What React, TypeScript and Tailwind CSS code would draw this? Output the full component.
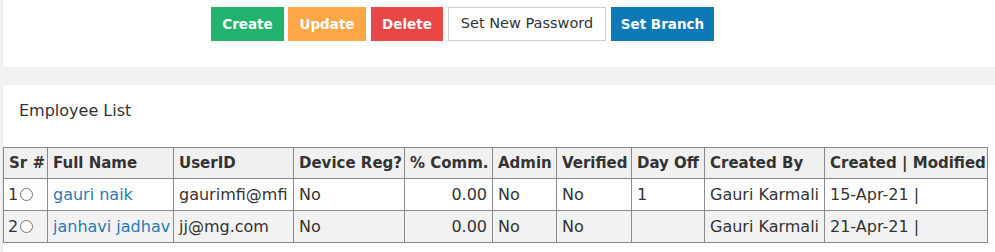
import React from "react";

const font = { fontFamily: '"DejaVu Sans", "Open Sans", sans-serif' };

function Radio() {
  return (
    <span className="inline-block w-[13px] h-[13px] rounded-full border border-[#777] bg-white align-[-1px] ml-[2px]" />
  );
}

const rows = [
  { sr: "1", name: "gauri naik", uid: "gaurimfi@mfi", dev: "No", comm: "0.00", admin: "No", ver: "No", off: "1", by: "Gauri Karmali", cm: "15-Apr-21 |" },
  { sr: "2", name: "janhavi jadhav", uid: "jj@mg.com", dev: "No", comm: "0.00", admin: "No", ver: "No", off: "", by: "Gauri Karmali", cm: "21-Apr-21 |" },
];

export default function App() {
  const th = "border border-[#8a8a8a] px-[5px] text-left font-bold text-[15px] h-[31px] whitespace-nowrap";
  const td = "border border-[#8a8a8a] px-[5px] h-[32px] whitespace-nowrap";
  return (
    <div className="w-[995px] h-[252px] bg-[#f1f2f4] overflow-hidden text-[#333]" style={font}>
      <div className="ml-[2px] h-[67px] bg-white border-l border-[#e6e6e6] flex gap-[4px] pl-[208px] pt-[7px]">
        <button className="h-[34px] w-[73px] bg-[#21b36b] text-white text-[13.5px] font-bold">Create</button>
        <button className="h-[34px] w-[78px] bg-[#ffa646] text-white text-[13.5px] font-bold">Update</button>
        <button className="h-[34px] w-[72px] bg-[#e94646] text-white text-[13.5px] font-bold ml-[1px]">Delete</button>
        <button className="h-[34px] w-[158px] bg-white border border-[#cfcfcf] text-[#333] text-[14.5px] ml-[1px]">Set New Password</button>
        <button className="h-[34px] w-[103px] bg-[#0e79b7] text-white text-[13.5px] font-bold ml-[1px]">Set Branch</button>
      </div>
      <div className="h-[18px]" />
      <div className="ml-[2px] h-[167px] bg-white border-l border-[#e6e6e6]">
        <div className="pl-[16px] pt-[16px] text-[16px] leading-[20px]">Employee List</div>
        <table className="table-fixed border-collapse mt-[26px] w-[984px] text-[16px]">
          <colgroup>
            <col className="w-[44px]" />
            <col className="w-[126px]" />
            <col className="w-[120px]" />
            <col className="w-[111px]" />
            <col className="w-[88px]" />
            <col className="w-[64px]" />
            <col className="w-[75px]" />
            <col className="w-[73px]" />
            <col className="w-[120px]" />
            <col className="w-[163px]" />
          </colgroup>
          <thead>
            <tr className="bg-[#f0f0f0]">
              <th className={th}>Sr #</th>
              <th className={th}>Full Name</th>
              <th className={th}>UserID</th>
              <th className={th}>Device Reg?</th>
              <th className={th}>% Comm.</th>
              <th className={th}>Admin</th>
              <th className={th}>Verified</th>
              <th className={th}>Day Off</th>
              <th className={th}>Created By</th>
              <th className={th}>Created | Modified</th>
            </tr>
          </thead>
          <tbody>
            {rows.map((r, i) => (
              <tr key={r.sr} className={i % 2 === 1 ? "bg-[#f2f2f2]" : "bg-white"}>
                <td className={td + " pl-[4px]"}>{r.sr}<Radio /></td>
                <td className={td}><a className="text-[#2a7ab3]">{r.name}</a></td>
                <td className={td}>{r.uid}</td>
                <td className={td}>{r.dev}</td>
                <td className={td + " text-right"}>{r.comm}</td>
                <td className={td}>{r.admin}</td>
                <td className={td}>{r.ver}</td>
                <td className={td}>{r.off}</td>
                <td className={td}>{r.by}</td>
                <td className={td}>{r.cm}</td>
              </tr>
            ))}
          </tbody>
        </table>
      </div>
    </div>
  );
}
